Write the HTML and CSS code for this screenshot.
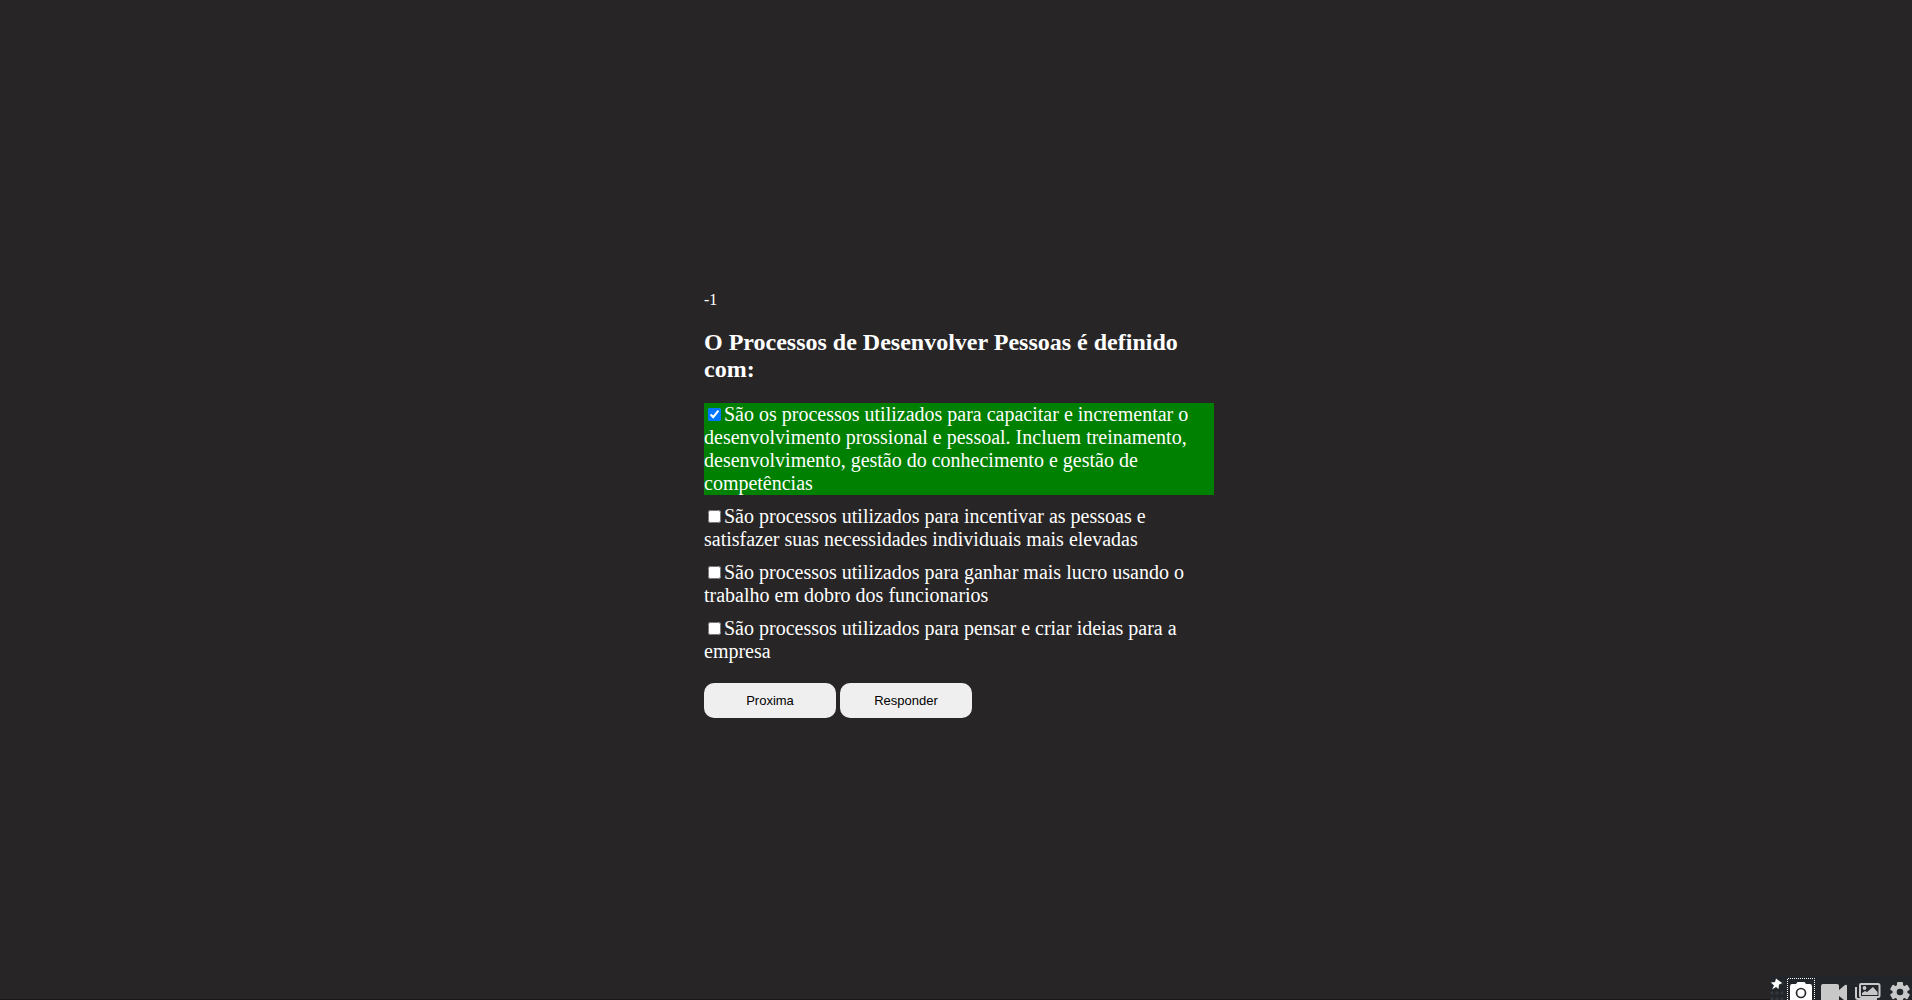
FILE: index.html
```html
<!DOCTYPE html>
<html lang="pt-BR">
<head>
<meta charset="utf-8">
<title>Quiz</title>
<link rel="stylesheet" href="styles.css">
</head>
<body>
<main class="quiz">
  <span class="score">-1</span>
  <h1 class="question">O Processos de Desenvolver Pessoas é definido com:</h1>
  <ul class="answers">
    <li class="answer answer-correct"><input type="checkbox" id="a1" checked><label for="a1">São os processos utilizados para capacitar e incrementar o desenvolvimento prossional e pessoal. Incluem treinamento, desenvolvimento, gestão do conhecimento e gestão de competências</label></li>
    <li class="answer"><input type="checkbox" id="a2"><label for="a2">São processos utilizados para incentivar as pessoas e satisfazer suas necessidades individuais mais elevadas</label></li>
    <li class="answer"><input type="checkbox" id="a3"><label for="a3">São processos utilizados para ganhar mais lucro usando o trabalho em dobro dos funcionarios</label></li>
    <li class="answer"><input type="checkbox" id="a4"><label for="a4">São processos utilizados para pensar e criar ideias para a empresa</label></li>
  </ul>
  <div class="actions">
    <button type="button" class="action">Proxima</button>
    <button type="button" class="action">Responder</button>
  </div>
</main>
<div class="capture-bar">
  <button type="button" class="pin" aria-label="Fixar">
    <svg width="17" height="24" viewBox="0 0 17 24"><g fill="#33373b"><circle cx="2" cy="7" r="1.7"/><circle cx="12" cy="7" r="1.7"/><circle cx="2" cy="17" r="1.7"/><circle cx="7" cy="17" r="1.7"/><circle cx="12" cy="17" r="1.7"/><circle cx="2" cy="23" r="1.7"/><circle cx="7" cy="23" r="1.7"/><circle cx="12" cy="23" r="1.7"/></g><path fill="#fff" d="M6 2.500L12 7l-1.500 1-1.500.5-.5 4.500-2.500-2-4 2.500L4 9.500 1 6.500l4-.5z"/></svg>
  </button>
  <div class="tools">
    <button type="button" class="tool" aria-label="Capturar tela">
      <svg width="28" height="24" viewBox="0 0 28 24"><path d="M.5 24V2.500h27V24" fill="none" stroke="#fff" stroke-dasharray="1 1"/><path fill="#fff" d="M3 11q0-3 2-3h4l1.500-2h7L19 8h4q2 0 2 3v13H3z"/><circle cx="14" cy="17" r="4.500" fill="none" stroke="#26292d" stroke-width="1.700"/></svg>
    </button>
    <button type="button" class="tool" aria-label="Gravar">
      <svg width="28" height="24" viewBox="0 0 28 24"><path fill="#c8c8c8" d="M3 8h14q2 0 2 2v4l6-5q2-1 2 1v14h-3l-5-4v4H1V10q0-2 2-2z"/></svg>
    </button>
    <button type="button" class="tool" aria-label="Galeria">
      <svg width="28" height="24" viewBox="0 0 28 24"><path fill="none" stroke="#c8c8c8" stroke-width="2" d="M3 11v10q0 2 2 2h19M8 8h17q1.500 0 1.500 1.500v10q0 1.500-1.500 1.500H8.500Q7 21 7 19.500V9q0-1 1-1z"/><circle cx="11.500" cy="12" r="1.900" fill="#c8c8c8"/><path fill="#c8c8c8" d="M9 19v-2l3-2 2 1 6-5 4.500 5v3z"/></svg>
    </button>
    <button type="button" class="tool" aria-label="Ajustes">
      <svg width="26" height="24" viewBox="0 0 26 24"><g fill="#c8c8c8"><rect x="11" y="6" width="6" height="20" rx="1"/><rect x="11" y="6" width="6" height="20" rx="1" transform="rotate(60 14 16)"/><rect x="11" y="6" width="6" height="20" rx="1" transform="rotate(120 14 16)"/><circle cx="14" cy="16" r="7.500"/></g><circle cx="14" cy="16" r="3.300" fill="#22262a"/></svg>
    </button>
  </div>
</div>
</body>
</html>
```
FILE: styles.css
```css
* {
  box-sizing: border-box;
}

body {
  margin: 0;
  min-height: 100vh;
  display: flex;
  align-items: center;
  justify-content: center;
  padding: 9px 0 0 6px;
  border-bottom: 1px solid #1e171a;
  background: #272526;
  color: #fff;
  font-family: "Liberation Serif", "Times New Roman", serif;
  font-size: 16px;
}

.quiz {
  width: 100%;
  max-width: 510px;
}

.score {
  display: block;
  line-height: 18px;
}

.question {
  margin: 20px 0;
  font-size: 24px;
  line-height: 27px;
}

.answers {
  display: flex;
  flex-direction: column;
  gap: 10px;
  margin: 0 0 20px;
  padding: 0;
  list-style: none;
  font-size: 20px;
  line-height: 23px;
}

.answer-correct {
  background: #008000;
}

.answer input {
  width: 13px;
  height: 13px;
  margin: 3px 3px 3px 4px;
}

.actions {
  display: flex;
  gap: 4px;
}

.action {
  width: 132px;
  height: 35px;
  border: 0;
  border-radius: 10px;
  background: #efefef;
  color: #000;
  font: 13px "Liberation Sans", Arial, sans-serif;
}

.capture-bar {
  position: fixed;
  right: 0;
  bottom: 0;
  display: flex;
  background: #22262a;
}

.tools {
  display: flex;
  gap: 5px;
}

.pin,
.tool {
  display: flex;
  padding: 0;
  border: 0;
  background: none;
}
```
